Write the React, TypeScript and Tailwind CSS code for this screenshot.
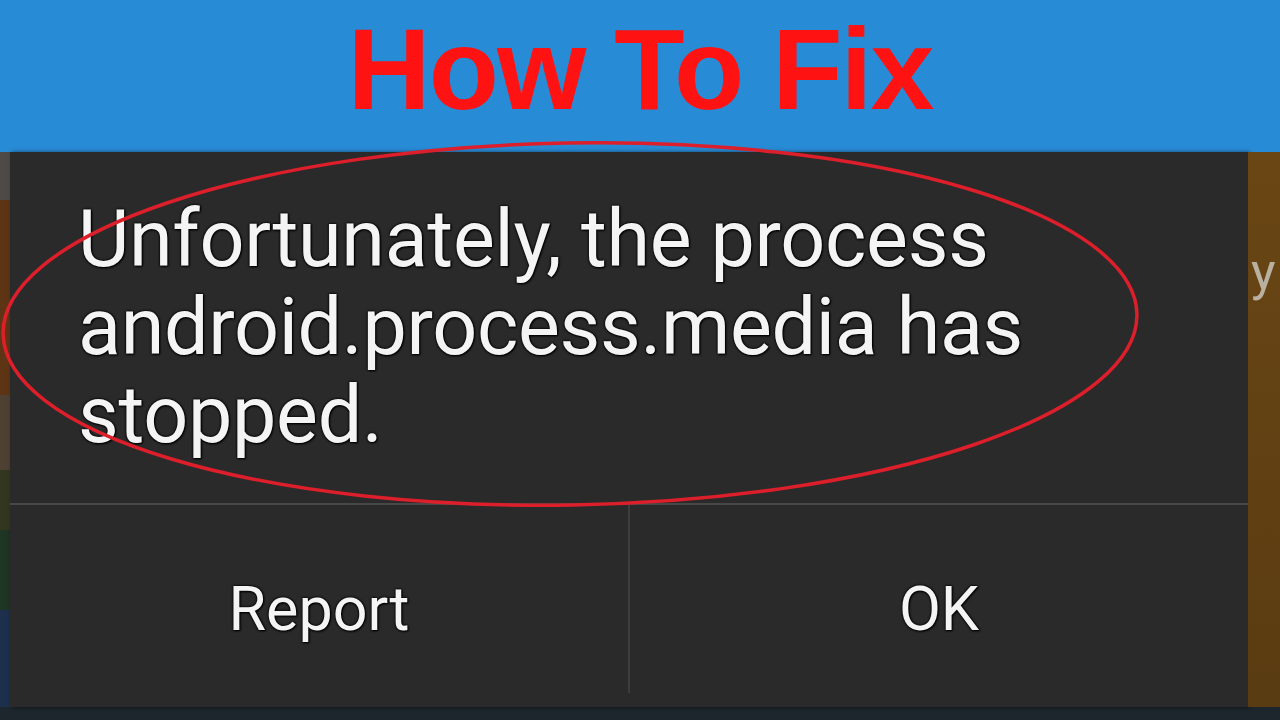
export default function App() {
  const shadow = { textShadow: "0 0 3px #000, 0 0 2px #000, 1px 1px 2px #000" };
  return (
    <div className="relative w-[1280px] h-[720px] overflow-hidden bg-[#1e2328]">
      <header className="h-[152px] bg-[#288bd6] flex justify-center">
        <h1 className="mt-[9px] text-[115px] leading-[120px] font-bold tracking-[-2px] text-[#ff1212] font-['Liberation_Sans',Arial,sans-serif]">
          How To Fix
        </h1>
      </header>

      <div className="flex h-[555px]">
        {/* blurred home screen behind the dialog */}
        <div className="w-[10px] flex flex-col">
          <div className="h-[48px] bg-[#4d4a48]" />
          <div className="h-[195px] bg-[#5e3514]" />
          <div className="h-[75px] bg-[#4e4032]" />
          <div className="h-[60px] bg-[#33361e]" />
          <div className="h-[80px] bg-[#1d3522]" />
          <div className="flex-1 bg-[#1c2f4c]" />
        </div>

        <div className="flex-1 bg-[#2b2a2b] flex flex-col shadow-[2px_0_4px_rgba(0,0,0,0.5)] font-['Roboto',sans-serif] text-[#f4f4f4]">
          <div className="h-[351px] pt-[43px] pl-[68px]">
            <p className="text-[79px] leading-[88px] tracking-[-0.3px]" style={shadow}>
              Unfortunately, the process
              <br />
              android.process.media has
              <br />
              stopped.
            </p>
          </div>
          <div className="h-[2px] bg-[#474747]" />
          <div className="flex-1 flex">
            <button className="flex-1 flex items-center justify-center pt-[8px] text-[61px]" style={shadow}>
              Report
            </button>
            <div className="w-[2px] bg-[#3d3d3d] mb-[14px]" />
            <button className="flex-1 flex items-center justify-center pt-[8px] text-[61px]" style={shadow}>
              OK
            </button>
          </div>
        </div>

        <div className="w-[32px] flex flex-col bg-gradient-to-b from-[#6a4614] to-[#5a3c12]">
          <div className="h-[94px]" />
          <span className="pl-[3px] text-[52px] leading-[52px] text-[#b9b0a0] font-['Roboto',sans-serif]">y</span>
        </div>
      </div>

      <div className="h-[13px] bg-[#1d262c]" />

      <svg className="absolute inset-0 pointer-events-none" width="1280" height="720" viewBox="0 0 1280 720">
        <ellipse
          cx="570"
          cy="324"
          rx="567"
          ry="181"
          fill="none"
          stroke="#dc1f2a"
          strokeWidth="3.5"
          transform="rotate(-1 570 324)"
        />
      </svg>
    </div>
  );
}
